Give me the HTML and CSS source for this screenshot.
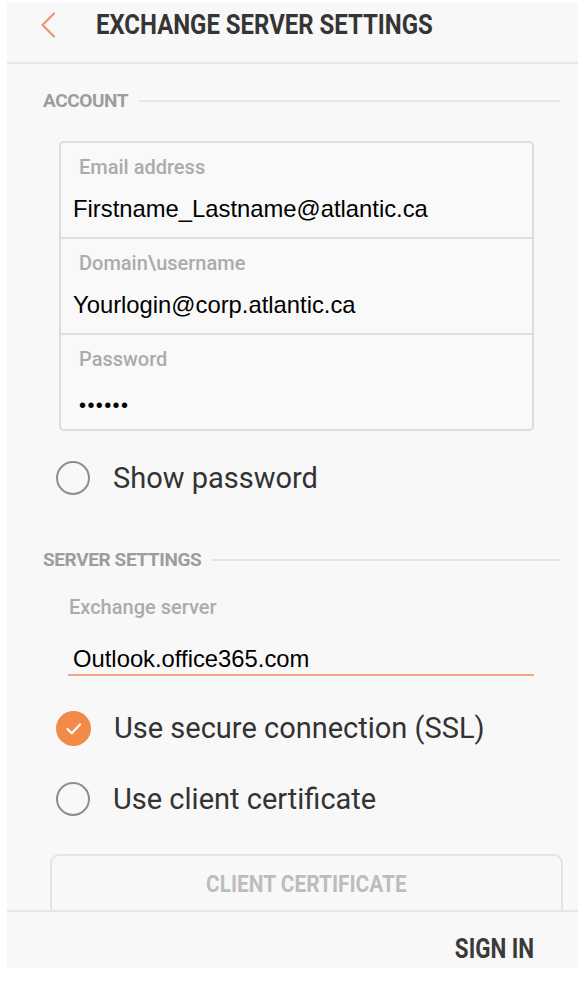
FILE: index.html
```html
<!DOCTYPE html>
<html lang="en">
<head>
<meta charset="utf-8">
<title>Exchange Server Settings</title>
<link rel="stylesheet" href="styles.css">
</head>
<body>
<div class="app">
  <header class="header">
    <svg class="back" width="16" height="26" viewBox="0 0 16 26" aria-hidden="true">
      <polyline points="14,1.5 2.5,13 14,24.5" fill="none" stroke="#e9957a" stroke-width="2.2" stroke-linecap="round" stroke-linejoin="round"/>
    </svg>
    <h1 class="title"><span class="cond">EXCHANGE SERVER SETTINGS</span></h1>
  </header>

  <main class="main">
    <div class="section-head">
      <span class="section-label">ACCOUNT</span>
      <span class="section-line"></span>
    </div>

    <div class="card">
      <div class="card-row">
        <div class="field-label">Email address</div>
        <div class="field-value">Firstname_Lastname@atlantic.ca</div>
      </div>
      <div class="card-row">
        <div class="field-label">Domain\username</div>
        <div class="field-value">Yourlogin@corp.atlantic.ca</div>
      </div>
      <div class="card-row">
        <div class="field-label">Password</div>
        <div class="field-value dots">••••••</div>
      </div>
    </div>

    <div class="option opt-show">
      <span class="radio"></span>
      <span class="option-text">Show password</span>
    </div>

    <div class="section-head section-server">
      <span class="section-label">SERVER SETTINGS</span>
      <span class="section-line"></span>
    </div>

    <div class="server-label">Exchange server</div>
    <div class="server-field">
      <span class="field-value">Outlook.office365.com</span>
    </div>

    <div class="option opt-ssl">
      <svg class="check" width="35" height="35" viewBox="0 0 35 35" aria-hidden="true">
        <circle cx="17.5" cy="17.5" r="17.5" fill="#f28a48"/>
        <polyline points="11.5,18 15.8,22.3 24,13.5" fill="none" stroke="#ffffff" stroke-width="2.2" stroke-linecap="round" stroke-linejoin="round"/>
      </svg>
      <span class="option-text">Use secure connection (SSL)</span>
    </div>

    <div class="option opt-cert">
      <span class="radio"></span>
      <span class="option-text">Use client certificate</span>
    </div>

    <div class="cert-button"><span class="cond">CLIENT CERTIFICATE</span></div>
  </main>

  <footer class="footer">
    <span class="sign-in cond">SIGN IN</span>
  </footer>
</div>
</body>
</html>
```

FILE: styles.css
```css
* {
  box-sizing: border-box;
}

html, body {
  margin: 0;
  padding: 0;
  background: #ffffff;
}

body {
  font-family: Roboto, "Noto Sans", "DejaVu Sans", sans-serif;
  width: 585px;
  height: 981px;
  overflow: hidden;
}

.app {
  margin: 3px 7px 0 7px;
  width: 571px;
  height: 965px;
  background: #f8f8f8;
  display: flex;
  flex-direction: column;
}

.cond {
  display: inline-block;
  transform: scaleX(0.855);
  transform-origin: left center;
  white-space: nowrap;
}

/* Header */
.header {
  height: 61px;
  flex: none;
  display: flex;
  align-items: flex-start;
  padding: 6px 0 0 33px;
  border-bottom: 2px solid #e6e6e6;
}

.back {
  display: block;
  margin-top: 3px;
  flex: none;
}

.title {
  margin: 0 0 0 40px;
  font-size: 28px;
  line-height: 32px;
  font-weight: 700;
  color: #353535;
  letter-spacing: 0;
}

/* Main scroll area */
.main {
  height: 846px;
  flex: none;
  overflow: hidden;
}

.section-head {
  display: flex;
  align-items: center;
  height: 20px;
  margin-top: 27px;
  padding-left: 36px;
  padding-right: 18px;
}

.section-server {
  margin-top: 52px;
}

.section-label {
  font-size: 19px;
  line-height: 20px;
  font-weight: 700;
  color: #9d9d9d;
  letter-spacing: -0.4px;
  white-space: nowrap;
}

.section-line {
  flex: 1;
  height: 2px;
  background: #e6e6e6;
  margin-left: 11px;
}

/* Account card */
.card {
  margin: 30px 0 0 52px;
  width: 475px;
  border: 2px solid #dcdcdc;
  border-radius: 5px;
  background: #f9f9f9;
}

.card-row {
  height: 94px;
  padding: 12px 0 0 0;
}

.card-row + .card-row {
  height: 96px;
  border-top: 2px solid #dedede;
}

.field-label {
  padding-left: 18px;
  font-size: 20px;
  line-height: 24px;
  font-weight: 500;
  color: #ababab;
}

.field-value {
  margin-top: 16px;
  padding-left: 12px;
  font-family: "Liberation Sans", Arial, sans-serif;
  font-size: 23.8px;
  line-height: 28px;
  color: #000000;
  white-space: nowrap;
}

.dots {
  padding-left: 18px;
  font-size: 20px;
  letter-spacing: 1.4px;
  margin-top: 20px;
}

/* Options */
.option {
  display: flex;
  align-items: center;
  height: 40px;
  padding-left: 49px;
}

.opt-show {
  margin-top: 27px;
}

.opt-ssl {
  margin-top: 32px;
}

.opt-cert {
  margin-top: 31px;
}

.radio {
  width: 34px;
  height: 34px;
  border: 2px solid #8e8e8e;
  border-radius: 50%;
  flex: none;
}

.check {
  display: block;
  flex: none;
}

.option-text {
  margin-left: 23px;
  font-size: 29px;
  line-height: 36px;
  color: #333333;
  white-space: nowrap;
}

/* Server */
.server-label {
  margin-top: 25px;
  padding-left: 62px;
  font-size: 20px;
  line-height: 24px;
  font-weight: 500;
  color: #ababab;
}

.server-field {
  margin: 26px 0 0 61px;
  width: 466px;
  padding-bottom: 1px;
  border-bottom: 2px solid #f4a787;
}

.server-field .field-value {
  display: block;
  margin-top: 0;
  padding-left: 5px;
}

/* Client certificate button */
.cert-button {
  margin: 35px 0 0 43px;
  width: 513px;
  height: 64px;
  border: 2px solid #e4e4e4;
  border-radius: 9px;
  display: flex;
  align-items: flex-start;
  justify-content: center;
  padding-top: 14px;
  font-size: 24px;
  line-height: 28px;
  font-weight: 700;
  color: #bdbdbd;
}

.cert-button .cond {
  transform-origin: center center;
  transform: scaleX(0.87);
}

/* Footer */
.footer {
  flex: none;
  height: 58px;
  border-top: 2px solid #e6e6e6;
  display: flex;
  justify-content: flex-end;
  align-items: flex-start;
  padding: 23px 44px 0 0;
}

.sign-in {
  font-size: 28px;
  line-height: 28px;
  font-weight: 700;
  color: #3a3a3a;
  transform-origin: right center;
  transform: scaleX(0.8);
}
```
